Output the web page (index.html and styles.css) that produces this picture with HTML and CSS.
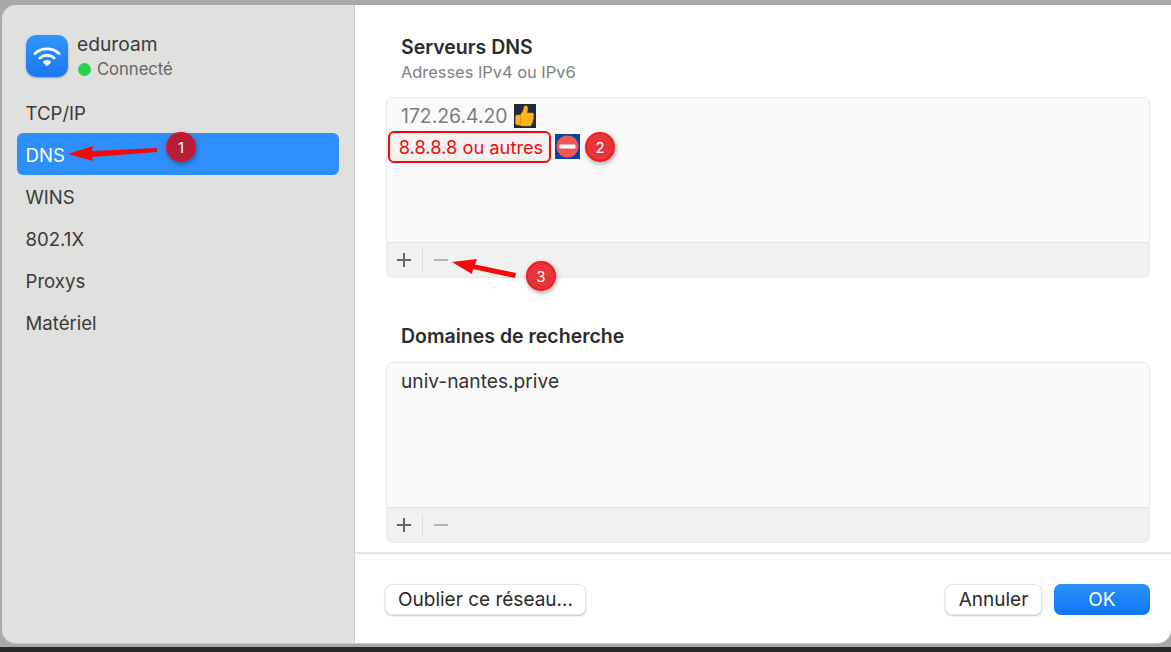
FILE: index.html
```html
<!DOCTYPE html>
<html lang="fr">
<head>
<meta charset="utf-8">
<title>eduroam DNS</title>
<link rel="stylesheet" href="styles.css">
</head>
<body>
<div class="page">
  <div class="window">
    <aside class="sidebar">
      <header class="net">
        <div class="net-icon">
          <svg width="28" height="21" viewBox="0 0 28 21" fill="none" stroke="#fff" stroke-linecap="round">
            <path d="M2 7.600C8.600 1.400 19.400 1.400 26 7.600" stroke-width="2.800"/>
            <path d="M6.800 12C11 8.300 17 8.300 21.200 12" stroke-width="2.800"/>
            <path d="M11 16C12.800 14.800 15.200 14.800 17 16L14 19Z" fill="#fff" stroke-width="1.800" stroke-linejoin="round"/>
          </svg>
        </div>
        <div class="net-text">
          <div class="net-name">eduroam</div>
          <div class="net-status"><span class="dot"></span>Connecté</div>
        </div>
      </header>
      <nav class="nav">
        <div class="nav-item">TCP/IP</div>
        <div class="nav-item active">DNS</div>
        <div class="nav-item">WINS</div>
        <div class="nav-item">802.1X</div>
        <div class="nav-item">Proxys</div>
        <div class="nav-item">Matériel</div>
      </nav>
    </aside>
    <main class="main">
      <div class="content">
        <section class="group">
          <h2 class="title">Serveurs DNS</h2>
          <p class="subtitle">Adresses IPv4 ou IPv6</p>
          <div class="panel">
            <div class="list">
              <div class="row dim">172.26.4.20
                <svg class="thumb" width="22" height="24" viewBox="0 0 22 24">
                  <rect width="22" height="24" fill="#1f2a40"/>
                  <path d="M1.500 12.500c0-1 .8-1.600 1.800-1.600h3c1.800-1.800 3.400-4.800 3.700-7.900.1-1.600 3.500-1.700 3.800.6.2 1.900-.3 4-1 5.300h5.200c2.400 0 2.400 3.200.9 3.600 1.300.6 1.100 3.100-.4 3.400.9.8.5 2.900-.9 3.200.5 1.100-.2 2.800-1.900 2.800H8.500c-2 0-2.700-1-4.200-1H3.300c-1 0-1.800-.7-1.800-1.700Z" fill="#fcb617" stroke="#d98a10" stroke-width=".5"/>
                  <path d="M6.500 11v9" stroke="#d98a10" stroke-width=".8"/>
                </svg>
              </div>
              <div class="row boxed">
                <span class="redbox">8.8.8.8 ou autres</span>
                <svg class="noentry" width="25" height="25" viewBox="0 0 25 25">
                  <rect width="25" height="25" fill="#0a43a8"/>
                  <circle cx="12.500" cy="12.500" r="11" fill="#ee5a50"/>
                  <rect x="4.500" y="10.500" width="16" height="4" rx="1" fill="#fff"/>
                </svg>
              </div>
            </div>
            <div class="toolbar">
              <svg class="plus" width="14" height="14" viewBox="0 0 14 14"><path d="M7 0V14M0 7H14" stroke="#666" stroke-width="2"/></svg>
              <span class="sep"></span>
              <svg class="minus" width="14" height="2" viewBox="0 0 14 2"><path d="M0 1H14" stroke="#b4b4b4" stroke-width="2"/></svg>
            </div>
          </div>
        </section>
        <section class="group second">
          <h2 class="title">Domaines de recherche</h2>
          <div class="panel">
            <div class="list">
              <div class="row domain">univ-nantes.prive</div>
            </div>
            <div class="toolbar">
              <svg class="plus" width="14" height="14" viewBox="0 0 14 14"><path d="M7 0V14M0 7H14" stroke="#666" stroke-width="2"/></svg>
              <span class="sep"></span>
              <svg class="minus" width="14" height="2" viewBox="0 0 14 2"><path d="M0 1H14" stroke="#b4b4b4" stroke-width="2"/></svg>
            </div>
          </div>
        </section>
      </div>
      <footer class="footer">
        <button class="btn wide">Oublier ce réseau...</button>
        <div class="footer-right">
          <button class="btn cancel">Annuler</button>
          <button class="btn primary">OK</button>
        </div>
      </footer>
    </main>
  </div>
  <div class="strip"></div>
  <svg class="arrows" width="1171" height="652" viewBox="0 0 1171 652">
    <path d="M68 154 93 146 92 151 157 148 157 152 92 157 93 161Z" fill="#f50808"/>
    <path d="M452 262 477 259 475 264.500 516 273 515 278 473 269 472 274Z" fill="#f50808"/>
  </svg>
  <span class="badge b1">1</span>
  <span class="badge b2">2</span>
  <span class="badge b3">3</span>
</div>
</body>
</html>
```
FILE: styles.css
```css
* { box-sizing: border-box; }
html, body { margin: 0; padding: 0; }
body {
  width: 1171px;
  height: 652px;
  overflow: hidden;
  font-family: Inter, "Liberation Sans", sans-serif;
  background: #a9a9a7;
}
.page {
  position: relative;
  width: 1171px;
  height: 652px;
  display: flex;
  flex-direction: column;
  padding: 5px 0 0 2px;
}
.window {
  flex: 1;
  display: flex;
  border-radius: 14px 0 14px 14px;
  overflow: hidden;
  border-bottom: 1px solid #c9c9c7;
  margin-bottom: 3px;
}
.strip {
  height: 5px;
  margin: 0 0 0 -2px;
  background: #26282a;
  flex: none;
}
.sidebar {
  width: 353px;
  flex: none;
  background: #e0e0de;
  border-right: 1px solid #cfcfcd;
  padding: 30px 15px 0 14.500px;
}
.net {
  display: flex;
  gap: 9px;
  padding-left: 9.500px;
  height: 42px;
}
.net-icon {
  width: 42px;
  height: 42px;
  border-radius: 10px;
  background: linear-gradient(#2f95fb, #1a78f2);
  box-shadow: 0 1px 2px rgba(0, 0, 0, .3);
  display: flex;
  align-items: center;
  justify-content: center;
}
.net-text { display: flex; flex-direction: column; margin-top: -1px; }
.net-name {
  font-size: 19.200px;
  line-height: 20px;
  color: #3b3b3b;
}
.net-status {
  margin-top: 5px;
  display: flex;
  align-items: center;
  gap: 6px;
  font-size: 16.600px;
  line-height: 20px;
  color: #666;
}
.dot {
  width: 13px;
  height: 13px;
  margin-left: 1px;
  border-radius: 50%;
  background: #2bd04d;
}
.nav { margin-top: 14px; }
.nav-item {
  height: 42px;
  padding: 2px 0 0 9px;
  display: flex;
  align-items: center;
  font-size: 18.600px;
  color: #3a3a3a;
  border-radius: 6px;
}
.nav-item.active { background: #2e8ffa; color: #fff; }
.main {
  flex: 1;
  background: #fff;
  display: flex;
  flex-direction: column;
}
.content {
  height: 549px;
  border-bottom: 2px solid #e6e6e6;
  padding: 31px 21px 0 31px;
}
.title {
  margin: 0 0 0 15px;
  font-size: 19.500px;
  line-height: 22px;
  font-weight: 600;
  color: #2c2c2c;
}
.subtitle {
  margin: 4px 0 0 15px;
  font-size: 16.400px;
  line-height: 20px;
  color: #808080;
}
.panel {
  margin-top: 15px;
  height: 181px;
  background: #fafafa;
  border: 1px solid #e8e8e8;
  border-radius: 6px;
  display: flex;
  flex-direction: column;
  overflow: hidden;
}
.second { margin-top: 47px; }
.list { flex: 1; padding-top: 2px; }
.row {
  height: 31px;
  display: flex;
  align-items: center;
  font-size: 19.400px;
  color: #2c2c2c;
  padding-left: 14px;
}
.row.dim { color: #7c7c7c; gap: 6px; }
.row.domain { height: 26px; margin-top: 3px; font-size: 19.200px; color: #333; }
.row.boxed { padding-left: 1px; }
.redbox {
  width: 163px;
  height: 32px;
  padding-left: 3px;
  border: 2px solid #f40a0a;
  border-radius: 6px;
  background: #f3f3f3;
  color: #f40a0a;
  font-size: 18.300px;
  display: flex;
  align-items: center;
  justify-content: center;
  box-shadow: inset 0 0 5px rgba(0, 0, 0, .06);
}
.noentry { margin-left: 4px; }
.toolbar {
  height: 35px;
  flex: none;
  background: #f1f1f1;
  border-top: 1px solid #e4e4e4;
  display: flex;
  align-items: center;
}
.plus { margin-left: 10px; }
.sep {
  width: 1px;
  height: 23px;
  margin: 0 11px;
  background: #dcdcdc;
}
.footer {
  flex: 1;
  padding: 30px 21px 0 30px;
  display: flex;
  justify-content: space-between;
  align-items: flex-start;
}
.footer-right { display: flex; gap: 12px; }
.btn {
  height: 31px;
  border: 1px solid #e6e6e6;
  border-radius: 7px;
  background: #fff;
  font-family: inherit;
  font-size: 19px;
  color: #2a2a2a;
  padding: 0;
  box-shadow: 0 1px 2px rgba(0, 0, 0, .22);
}
.wide { width: 201px; }
.cancel { width: 97px; }
.primary {
  width: 96px;
  border: none;
  color: #fff;
  background: linear-gradient(#2a90fb, #0f78f8);
  box-shadow: none;
}
.arrows { position: absolute; left: 0; top: 0; pointer-events: none; }
.badge {
  position: absolute;
  width: 30px;
  height: 30px;
  border-radius: 50%;
  display: flex;
  align-items: center;
  justify-content: center;
  color: #fff;
  font-size: 15px;
  background: #e8343b;
  border: 2px solid #f01c22;
  box-shadow: 1px 2px 5px rgba(0, 0, 0, .35);
}
.b1 { left: 166px; top: 132px; background: #b21f36; border-color: #dc1028; }
.b2 { left: 585px; top: 132px; }
.b3 { left: 526px; top: 261px; }
```
